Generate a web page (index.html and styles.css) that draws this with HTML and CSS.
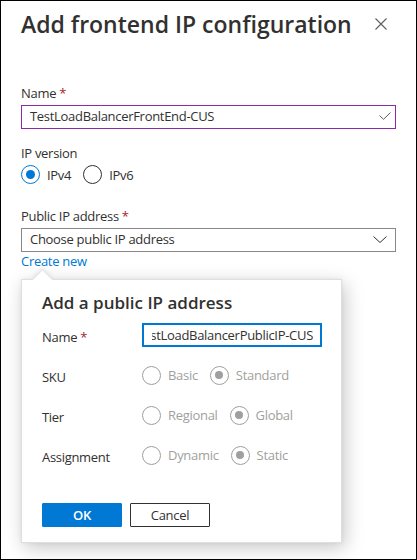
FILE: index.html
```html
<!DOCTYPE html>
<html lang="en">
<head>
    <meta charset="UTF-8">
    <meta name="viewport" content="width=device-width, initial-scale=1.0">
    <title>Add frontend IP configuration</title>
    <link rel="stylesheet" href="styles.css">
</head>
<body>
    <div class="blade">
        <div class="blade-header">
            <h1>Add frontend IP configuration</h1>
            <button class="close" aria-label="Close">
                <svg width="12" height="12" viewBox="0 0 12 12">
                    <path d="M0.5 0.5 L11.5 11.5 M11.5 0.5 L0.5 11.5" stroke="#605e5c" stroke-width="1.1" fill="none"/>
                </svg>
            </button>
        </div>

        <div class="field first">
            <div class="field-label">Name <span class="req">*</span></div>
            <div class="textbox valid">
                <span class="value">TestLoadBalancerFrontEnd-CUS</span>
                <svg width="12" height="8" viewBox="0 0 12 8">
                    <path d="M0.5 3.5 L4.5 7.3 L11.5 0.5" stroke="#605e5c" stroke-width="1" fill="none"/>
                </svg>
            </div>
        </div>

        <div class="field">
            <div class="field-label">IP version</div>
            <div class="radio-group">
                <span class="radio checked"><span class="circle"></span>IPv4</span>
                <span class="radio"><span class="circle"></span>IPv6</span>
            </div>
        </div>

        <div class="field public-ip">
            <div class="field-label">Public IP address <span class="req">*</span></div>
            <div class="textbox dropdown">
                <span class="value">Choose public IP address</span>
                <svg width="14" height="7" viewBox="0 0 14 7">
                    <path d="M0.5 0.5 L7 6.5 L13.5 0.5" stroke="#323130" stroke-width="1" fill="none"/>
                </svg>
            </div>
            <a class="link" href="#">Create new</a>
        </div>

        <div class="callout">
            <h2>Add a public IP address</h2>
            <div class="form-grid">
                <div class="row-label">Name <span class="req">*</span></div>
                <div class="textbox focused">
                    <span class="clip"><span>TestLoadBalancerPublicIP-CUS</span></span>
                </div>

                <div class="row-label">SKU</div>
                <div class="radio-group disabled">
                    <span class="radio"><span class="circle"></span>Basic</span>
                    <span class="radio checked"><span class="circle"></span>Standard</span>
                </div>

                <div class="row-label">Tier</div>
                <div class="radio-group disabled">
                    <span class="radio"><span class="circle"></span>Regional</span>
                    <span class="radio checked"><span class="circle"></span>Global</span>
                </div>

                <div class="row-label">Assignment</div>
                <div class="radio-group disabled">
                    <span class="radio"><span class="circle"></span>Dynamic</span>
                    <span class="radio checked"><span class="circle"></span>Static</span>
                </div>
            </div>
            <div class="actions">
                <button class="btn primary">OK</button>
                <button class="btn">Cancel</button>
            </div>
        </div>
    </div>
</body>
</html>
```

FILE: styles.css
```css
* {
    box-sizing: border-box;
}
body {
    margin: 0;
    font-family: "Open Sans", "Noto Sans", sans-serif;
    font-size: 13px;
    letter-spacing: -0.3px;
    color: #323130;
    background: #fff;
}
.blade {
    width: 417px;
    height: 560px;
    border: 1px solid #000;
    padding: 0 20px;
    overflow: hidden;
}
.blade-header {
    display: flex;
    align-items: center;
    justify-content: space-between;
    padding-top: 7px;
}
h1 {
    margin: 0;
    font-size: 23px;
    font-weight: 600;
    line-height: 32px;
    letter-spacing: 0;
}
.close {
    border: none;
    background: none;
    padding: 0;
    margin-right: 9px;
    width: 12px;
    height: 12px;
}
.close svg {
    display: block;
}
.field {
    margin-top: 15px;
}
.field.first {
    margin-top: 44px;
}
.field.public-ip {
    margin-top: 23px;
}
.field-label {
    line-height: 18px;
    margin-bottom: 3px;
}
.req {
    color: #a4262c;
}
.textbox {
    height: 24px;
    border: 1px solid #8a8886;
    display: flex;
    align-items: center;
    justify-content: space-between;
    padding: 0 8px 2px 8px;
    white-space: nowrap;
}
.textbox svg {
    display: block;
    flex: none;
}
.textbox.valid {
    border-color: #8a2ca8;
    padding-right: 4px;
}
.textbox.focused {
    border: 2px solid #0078d4;
    padding: 0 7px 1px 8px;
}
.clip {
    flex: 1;
    display: flex;
    justify-content: flex-end;
    overflow: hidden;
}
.link {
    display: block;
    line-height: 18px;
    color: #0078d4;
    text-decoration: none;
}

/* radio buttons */
.radio-group {
    display: flex;
    align-items: center;
    height: 19px;
    margin-top: 2px;
}
.radio {
    display: inline-flex;
    align-items: center;
    gap: 7px;
    margin-right: 12px;
}
.circle {
    width: 19px;
    height: 19px;
    border: 1px solid #323130;
    border-radius: 50%;
    display: flex;
    align-items: center;
    justify-content: center;
}
.radio.checked .circle {
    border-color: #0078d4;
}
.radio.checked .circle::after {
    content: "";
    width: 9px;
    height: 9px;
    border-radius: 50%;
    background: #0078d4;
}
.radio-group.disabled {
    height: 24px;
    margin-top: 0;
    color: #a19f9d;
}
.radio-group.disabled .circle {
    border-color: #a19f9d;
}
.radio-group.disabled .checked .circle::after {
    background: #a19f9d;
    width: 8px;
    height: 8px;
}

/* create-new callout */
.callout {
    position: relative;
    width: 321px;
    margin-top: 9px;
    border: 1px solid #e1dfdd;
    background: #fff;
    padding: 11px 20px 15px;
    box-shadow: 3px 5px 18px rgba(0, 0, 0, 0.22), 0 0 4px rgba(0, 0, 0, 0.06);
}
.callout::before {
    content: "";
    position: absolute;
    left: 13px;
    top: -8px;
    width: 14px;
    height: 14px;
    background: #fff;
    border-top: 1px solid #e1dfdd;
    border-left: 1px solid #e1dfdd;
    transform: rotate(45deg);
    box-shadow: -2px -2px 4px rgba(0, 0, 0, 0.06);
}
h2 {
    margin: 0;
    font-size: 17px;
    font-weight: 600;
    line-height: 24px;
    letter-spacing: 0;
}
.form-grid {
    display: grid;
    grid-template-columns: 100px 180px;
    grid-auto-rows: 24px;
    row-gap: 16px;
    margin-top: 8px;
}
.row-label {
    padding-top: 5px;
    line-height: 18px;
}
.actions {
    display: flex;
    gap: 8px;
    margin-top: 36px;
}
.btn {
    min-width: 80px;
    height: 24px;
    padding: 0 16px;
    border: 1px solid #323130;
    border-radius: 1px;
    background: #fff;
    color: #323130;
    font-family: inherit;
    font-size: 13px;
    letter-spacing: inherit;
}
.btn.primary {
    background: #0078d4;
    border-color: #0078d4;
    color: #fff;
    font-weight: 600;
}
```
